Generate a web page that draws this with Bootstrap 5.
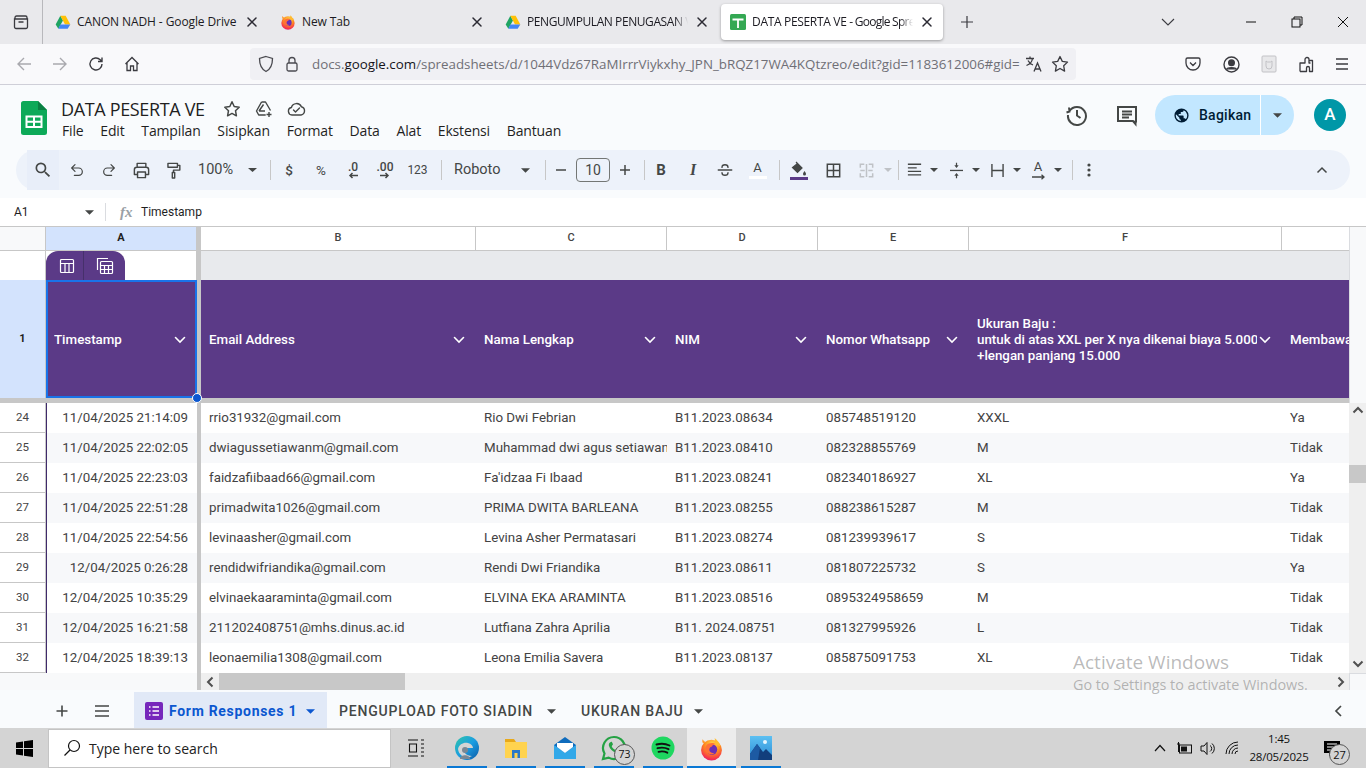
<!DOCTYPE html>
<html lang="id">
<head>
<meta charset="utf-8">
<title>DATA PESERTA VE</title>
<link rel="stylesheet" href="https://cdn.jsdelivr.net/npm/bootstrap@5.3.0/dist/css/bootstrap.min.css">
<style>
html,body{height:768px;overflow:hidden}
body{width:1366px;font-family:Roboto,"Liberation Sans",sans-serif;color:#444746;background:#fff;position:relative}
svg{display:block;flex:none}
.ic{fill:none;stroke:#444746;stroke-width:1.8;stroke-linecap:round;stroke-linejoin:round}
.icf{fill:#444746;stroke:none}
.tabstrip{height:44px;background:#e9e9ec;font-family:"Open Sans","Noto Sans",sans-serif;font-size:12px;color:#1c1b22}
.tabside{width:43px;height:44px;border-right:1px solid #b8b8bc}
.brtab{width:222px;height:36px;padding:0 8px 0 9px;gap:6px;flex:none;margin-right:3px}
.brtab.on{background:#fff;border-radius:4px;box-shadow:0 1px 3px rgba(0,0,0,.35)}
.first{margin-left:3px}
.brtxt{flex:1;overflow:hidden;white-space:nowrap;min-width:0;letter-spacing:-.1px}
.txtfade{-webkit-mask-image:linear-gradient(90deg,#000 92%,transparent);mask-image:linear-gradient(90deg,#000 92%,transparent)}
.tight{letter-spacing:-.42px}
.tight0{letter-spacing:-.32px}
.tight2{letter-spacing:-.75px}
.xbtn{width:16px;height:16px}
.newtab{margin-left:11px;width:20px}
.winbtns{margin-left:auto}
.chev{margin-right:52px}
.wbtn{width:46px;height:44px}
.navrow{height:41px;background:#f9f9fb;border-bottom:1px solid #cfcfd8;padding-left:6px}
.nb{width:36px;height:40px}
.nb4{width:35px}
.urlbar{width:826px;height:32px;margin-left:101px;background:#f0f0f4;border-radius:4px;padding:0 7px 0 8px;font-family:"Open Sans","Noto Sans",sans-serif;font-size:13.35px;color:#6f6f76}
.urltxt{flex:1;min-width:0;overflow:hidden;white-space:nowrap;margin-left:13px}
.urltxt b{font-weight:400;color:#15141a}
.lockgap{margin-left:11px}
.rnav{margin-left:98px}
.nb5{width:38px;height:40px}
.nb6{width:32px}
.shead{height:65px;background:#f9fbfd;padding-left:21px}
.slogo{margin-top:16px;margin-right:14px}
.stitlecol{padding-top:13px}
.stitle{font-family:"Open Sans","Noto Sans",sans-serif;font-size:18px;line-height:22px;color:#1f1f1f;letter-spacing:-.35px;width:152px;white-space:nowrap;margin-right:3px}
.titleic{width:32px}
.smenu{margin-top:1px;gap:16.75px;font-family:"Open Sans","Noto Sans",sans-serif;font-size:14px;line-height:20px;color:#1f1f1f;letter-spacing:-.15px;padding-left:1px}
.sright{margin-left:auto;padding-right:20px;padding-top:10px}
.hbtn{width:50px;height:40px}
.sharebtn{width:139px;height:40px;border-radius:20px;background:#c2e7ff;color:#001d35;margin-left:3px;margin-right:20px;overflow:hidden;font-size:14px;font-weight:500;letter-spacing:.25px}
.sharemain{width:106px;height:40px;padding-left:18px;gap:9px;border-right:1px solid #fff}
.sharecar{flex:1;height:40px}
.avatar{width:32px;height:32px;border-radius:50%;background:#0097a7;color:#fff;font-size:17px;font-weight:500}
.tbwrap{height:48px;background:#f9fbfd;padding:0 16px}
.tbpill{height:40px;background:#edf2fa;border-radius:20px;padding-left:11px;font-size:13.5px;color:#444746}
.tk{flex:none;height:40px;display:flex;align-items:center;justify-content:center}
.thov{background:#e8eef9}
.w8{width:9px}.w12{width:12px}.w30{width:30px}.w32{width:32px}.w33{width:33px}
.tzoom{width:73px;padding-left:9px;justify-content:flex-start;font-size:14.5px}
.tzoom span{width:50px}
.tfont{width:95px;padding-left:12px;justify-content:flex-start;font-size:14.5px}
.tfont span{width:67px}
.tsep{width:1px;height:20px;background:#c7c7c7;flex:none}
.m1{margin-left:1px}.m2{margin-left:2px}.m3{margin-left:3px}.m4{margin-left:4px}.m5{margin-left:5px}.m7{margin-left:7px}.m8{margin-left:8px}.m10{margin-left:10px}
.sizebox{width:34px;height:24px;border:1px solid #747775;border-radius:4px;font-size:14px;color:#444746;flex:none}
.tbold{font-weight:700;font-size:15px}
.tital{font-style:italic;font-weight:700;font-size:16px;font-family:"Liberation Serif",serif}
.tsm{font-size:12px}
.tdec{font-size:12px;font-weight:500;line-height:10px;text-align:center}
.tcolor{flex-direction:column;font-size:13px;line-height:14px}
.cbar{width:18px;height:3px;display:block;background:#fff;margin-top:1px}
.cbar2{background:#5b3a87;margin-top:0}
.tup{margin-left:auto;margin-right:12px}
.fxbar{height:29px;background:#fff;font-size:12px;color:#1f1f1f;border-bottom:1px solid #c7c7c7}
.namebox{width:106px;padding-left:14px;border-right:1px solid #dadce0;height:18px;padding-right:11px}
.fxl{font-family:"Liberation Serif",serif;font-style:italic;font-size:15px;color:#9aa0a6;width:35px;padding-left:14px;font-weight:700}
.gridarea{height:446px}
.sheetgrid{width:1349px;table-layout:fixed;border-collapse:separate;border-spacing:0;font-size:13.33px;color:#434343}
.sheetgrid td,.sheetgrid th{padding:0;overflow:hidden;white-space:nowrap;font-weight:400}
.wr{width:46px}.wa{width:151px}.wz{width:4px}.wb{width:275px}.wc{width:191px}.wd{width:151px}.we{width:151px}.wf{width:313px}.wg{width:67px}
.rowc{height:24px}
.rowc th{height:24px;text-align:center;font-size:11px;color:#444;font-weight:500;border-right:1px solid #c7c7c7;border-bottom:1px solid #c7c7c7;background:#fff}
.rowc .corner{background:#f8f9fa}
.rowc .csel{background:#d3e3fd;font-weight:700;color:#1f1f1f}
.rowc .lastc{border-right:0}
.fz{background:#c7c7c7!important;border:0!important}
.rowf{height:29px}
.rowf td{height:29px;background:#e8eaed;vertical-align:bottom}
.rowf .cw{background:#fff;border-right:1px solid #c7c7c7}
.rowf .rwn{background:#fff;border-right:1px solid #c7c7c7}
.ftab{width:79px;height:29px;background:#5b3a87;border-radius:12px 12px 0 0}
.ftab div{height:29px}
.ftab1{width:38px;padding-left:4px;border-right:1px solid #46306b}
.ftab2{flex:1}
.rowh{height:118px}
.rowh td{height:118px;background:#5b3a87;color:#fff;font-weight:500;padding:2px 11px 0 8px;line-height:16px;font-size:13.33px}
.rowh .rnh{background:#d3e3fd;color:#1f1f1f;text-align:center;font-size:11px;font-weight:700;padding:0;border-right:1px solid #c7c7c7}
.rowh .sela{border:2px solid #1a73e8;padding:2px 9px 0 6px}
.hc{gap:2px}
.hc span{flex:1;min-width:0;overflow:hidden}
.rowz{height:5px}
.rowz td{height:5px;background:#c7c7c7;line-height:0;font-size:0}
.rowd{height:30px}
.rowd td{height:30px;padding:0 8px;background:#fff}
.rowd:nth-child(even) td{background:#f7f8fa}
.rowd .rn{padding:0;text-align:center;font-size:11.5px;color:#444;background:#fff!important;border-right:1px solid #c7c7c7;border-bottom:1px solid #c7c7c7}
.rowd .ca{border-left:1px solid #3f2a6b;text-align:right;padding-right:9px}
.vbar{width:17px;height:446px;background:#f8f9fa}
.vtop{height:176px;background:#f8f9fa;border-left:1px solid #dadce0}
.vtrack{height:270px;background:#efefef;padding-bottom:2px}
.varrow{height:14px}
.vthumb{height:18px;background:#c8c8c8;margin-top:48px}
.hbar{height:17px;background:#f8f9fa}
.hleft{width:197px}
.hz{width:4px;background:#c7c7c7}
.htrack{flex:1;background:#efefef}
.harrow{width:18px}
.hthumb{width:186px;background:#c8c8c8}
.hright{margin-left:auto;width:17px;height:17px}
.hend{width:17px;background:#f8f9fa;border-left:1px solid #dadce0;border-top:1px solid #dadce0}
.tabsbar{height:38px;background:#f9fbfd;font-size:14px;letter-spacing:.8px;font-weight:500;color:#444746;padding-top:2px}
.addsh{width:40px;margin-left:42px;margin-top:2px}
.allsh{width:40px;margin-top:2px}
.shtab{height:36px;white-space:nowrap;padding-top:2px}
.shon{margin-left:12px;width:193px;background:#e1e9f7;color:#0b57d0;font-weight:700;padding-left:11px;gap:6px;letter-spacing:.7px}
.shon .car{margin-left:3px}
.sht2{padding-left:12px;width:254px;gap:14px}
.sht3{gap:10px}
.navprev{margin-left:auto;margin-right:23px;margin-top:2px}
.taskbar{height:40px;background:#d4d4d4;font-family:"Open Sans","Noto Sans",sans-serif;color:#111}
.startb{width:48px;height:40px}
.tsearch{width:343px;height:39px;background:#fff;padding-left:14px;gap:8px;font-size:14px;border:1px solid #c4c4c4;color:#222}
.tv{width:50px;height:40px}
.tapps{margin-left:1px}
.tapp{width:49px;height:40px;position:relative;flex:none}
.tapp::after{content:"";position:absolute;left:5px;right:4px;bottom:0;height:2px;background:#0a78d4}
.tact{background:#ececec}
.tact::after{left:0;right:0}
.tcount{position:absolute;right:3px;bottom:3px;width:21px;height:21px;border-radius:50%;background:#d4d4d4;border:1px solid #555;font-size:10.5px;line-height:19px;text-align:center;color:#111}
.tray{margin-left:auto;padding-right:12px}
.tr1{width:24px;height:40px}
.clock{width:62px;text-align:center;font-size:11.5px;line-height:18px;margin-left:4px;letter-spacing:-.2px}
.notif{width:44px;height:40px;position:relative}
.ncount{position:absolute;right:4px;bottom:3px;width:21px;height:21px;border-radius:50%;background:#d4d4d4;border:1px solid #555;font-size:11px;line-height:19px;text-align:center}
.wmark{position:absolute;left:1073px;top:650px;font-family:"Open Sans","Noto Sans",sans-serif;color:rgba(90,90,90,.42);pointer-events:none;white-space:nowrap}
.wm1{font-size:19px;line-height:24px}
.wm2{font-size:14.4px;line-height:22px;letter-spacing:-.03px}
.seldot{position:absolute;left:192px;top:393px;width:10px;height:10px;border-radius:50%;background:#0b57d0;border:1px solid #fff}
</style>
</head>
<body>
<svg width="0" height="0" style="position:absolute">
<defs>
<symbol id="drive" viewBox="0 0 24 22">
<polygon points="8,1 12,8 5,20.5 1,14" fill="#1fa463"/>
<polygon points="8,1 16,1 23,14 15,14" fill="#ffc107"/>
<polygon points="8,14 23,14 19,20.5 5,20.5" fill="#4285f4"/>
</symbol>
<radialGradient id="ffg" cx="55%" cy="25%" r="85%"><stop offset="0" stop-color="#ffe24a"/><stop offset=".45" stop-color="#ff8a1f"/><stop offset=".8" stop-color="#f5304e"/><stop offset="1" stop-color="#c81f8a"/></radialGradient>
<symbol id="fox" viewBox="0 0 24 24">
<circle cx="12" cy="13.5" r="10" fill="url(#ffg)"/>
<path d="M15 2c2.500 2 5 5 5.500 8L16 8z" fill="#ffbd2e"/>
<path d="M4 7c-1-1-1-3-.5-4 1 2 2.500 2.500 4 3z" fill="#ff9b2e"/>
<circle cx="12.500" cy="13" r="5" fill="#6b2fb5"/>
<path d="M7 9c2-2.500 7-3 9-1-2 0-3 1-3.500 2-2 .5-3 2-2.500 4 .5 2 3 3 5 2-2.500 3-7 1.500-8.500-1.500C5.500 12.500 6 10.500 7 9z" fill="#ff7139"/>
</symbol>
<symbol id="car" viewBox="0 0 10 5"><polygon points="0,0 10,0 5,5" fill="#444746"/></symbol>
<symbol id="x" viewBox="0 0 16 16"><path d="M4 4l8 8M12 4l-8 8" stroke="#2b2a33" stroke-width="1.500" stroke-linecap="round" fill="none"/></symbol>
<symbol id="chv" viewBox="0 0 12 8"><path d="M1.500 1.500L6 6l4.500-4.500" stroke="#fff" stroke-width="1.600" fill="none" stroke-linecap="round"/></symbol>
</defs>
</svg>

<!-- Browser tab strip -->
<div class="tabstrip d-flex align-items-center">
 <div class="tabside d-flex align-items-center justify-content-center">
  <svg width="18" height="18" viewBox="0 0 18 18" fill="none" stroke="#3b3b40" stroke-width="1.300"><path d="M3 6V4.500A1.500 1.500 0 0 1 4.500 3h9A1.500 1.500 0 0 1 15 4.500V6M2.500 6h13v8a1.500 1.500 0 0 1-1.500 1.500H4A1.500 1.500 0 0 1 2.500 14zM6.500 9h5"/></svg>
 </div>
 <div class="brtab first d-flex align-items-center"><svg width="16" height="15"><use href="#drive"/></svg><div class="brtxt">CANON NADH - Google Drive</div><svg class="xbtn" width="16" height="16"><use href="#x"/></svg></div>
 <div class="brtab d-flex align-items-center"><svg width="16" height="16"><use href="#fox"/></svg><div class="brtxt">New Tab</div><svg class="xbtn" width="16" height="16"><use href="#x"/></svg></div>
 <div class="brtab d-flex align-items-center"><svg width="16" height="15"><use href="#drive"/></svg><div class="brtxt txtfade tight">PENGUMPULAN PENUGASAN V</div><svg class="xbtn" width="16" height="16"><use href="#x"/></svg></div>
 <div class="brtab on d-flex align-items-center"><svg width="16" height="16" viewBox="0 0 16 16"><rect width="16" height="16" rx="1.500" fill="#34a853"/><path d="M2.500 5.500h11M8 5.500V14" stroke="#fff" stroke-width="1.800"/></svg><div class="brtxt txtfade tight0">DATA PESERTA VE <span class="tight2">- Google Spre</span></div><svg class="xbtn" width="16" height="16"><use href="#x"/></svg></div>
 <svg class="newtab" width="20" height="20" viewBox="0 0 20 20"><path d="M10 4v12M4 10h12" stroke="#3b3b40" stroke-width="1.200"/></svg>
 <div class="winbtns d-flex align-items-center">
  <svg class="chev" width="16" height="16" viewBox="0 0 16 16"><path d="M2 5l6 6 6-6" stroke="#3b3b40" stroke-width="1.100" fill="none"/></svg>
  <div class="wbtn d-flex align-items-center justify-content-center"><svg width="12" height="12" viewBox="0 0 12 12"><path d="M1 6h10" stroke="#111" stroke-width="1"/></svg></div>
  <div class="wbtn d-flex align-items-center justify-content-center"><svg width="12" height="12" viewBox="0 0 12 12" fill="none" stroke="#111"><rect x="1" y="3" width="8" height="8"/><path d="M3 3V1h8v8H9"/></svg></div>
  <div class="wbtn d-flex align-items-center justify-content-center"><svg width="12" height="12" viewBox="0 0 12 12"><path d="M1 1l10 10M11 1L1 11" stroke="#111" stroke-width="1"/></svg></div>
 </div>
</div>

<!-- Browser nav -->
<div class="navrow d-flex align-items-center">
 <div class="nb d-flex align-items-center justify-content-center"><svg width="16" height="16" viewBox="0 0 16 16" fill="none" stroke="#a9a9ae" stroke-width="1.400"><path d="M15 8H2M8 2L2 8l6 6"/></svg></div>
 <div class="nb d-flex align-items-center justify-content-center"><svg width="16" height="16" viewBox="0 0 16 16" fill="none" stroke="#a9a9ae" stroke-width="1.400"><path d="M1 8h13M8 2l6 6-6 6"/></svg></div>
 <div class="nb d-flex align-items-center justify-content-center"><svg width="16" height="16" viewBox="0 0 16 16" fill="none" stroke="#3b3b40" stroke-width="1.400"><path d="M14 8a6 6 0 1 1-1.800-4.300L14 5.500M14 1.500v4h-4"/></svg></div>
 <div class="nb nb4 d-flex align-items-center justify-content-center"><svg width="16" height="16" viewBox="0 0 16 16" fill="none" stroke="#3b3b40" stroke-width="1.300"><path d="M1.500 8L8 1.500 14.500 8M3 7v7.500h3.500V10h3v4.500H13V7"/></svg></div>
 <div class="urlbar d-flex align-items-center">
  <svg width="16" height="18" viewBox="0 0 16 18" fill="none" stroke="#4a4a50" stroke-width="1.300"><path d="M8 1.500L14.500 3.500C14.500 10 13 14 8 16.500 3 14 1.500 10 1.500 3.500z"/></svg>
  <svg class="lockgap" width="14" height="16" viewBox="0 0 14 16" fill="none" stroke="#4a4a50" stroke-width="1.300"><rect x="2" y="7" width="10" height="8" rx="1.500"/><path d="M4 7V4.500a3 3 0 0 1 6 0V7"/></svg>
  <div class="urltxt">docs.<b>google.com</b>/spreadsheets/d/1044Vdz67RaMIrrrViykxhy_JPN_bRQZ17WA4KQtzreo/edit?gid=1183612006#gid=</div>
  <svg class="m2" width="18" height="18" viewBox="0 0 18 18" fill="none" stroke="#3b3b40" stroke-width="1.300"><path d="M1 3.500h8M5 1.500v2M7.500 3.500C7 7 4 9.500 1.500 10.500M3 5.500c1 2 2.500 3.500 5 4.500M9 16.500l3.500-8.500 3.500 8.500M10 14h5"/></svg>
  <svg class="m8" width="18" height="18" viewBox="0 0 18 18" fill="none" stroke="#3b3b40" stroke-width="1.300" stroke-linejoin="round"><path d="M9 1.500l2.300 4.900 5.200.7-3.800 3.700.9 5.300L9 13.500 4.400 16.100l.9-5.300L1.500 7.100l5.200-.7z"/></svg>
 </div>
 <div class="rnav d-flex align-items-center">
  <div class="nb5 d-flex align-items-center justify-content-center"><svg width="16" height="16" viewBox="0 0 16 16" fill="none" stroke="#3b3b40" stroke-width="1.300"><path d="M2.500 2h11A1.500 1.500 0 0 1 15 3.500V7a7 7 0 0 1-14 0V3.500A1.500 1.500 0 0 1 2.500 2zM5 6.500l3 3 3-3"/></svg></div>
  <div class="nb5 d-flex align-items-center justify-content-center"><svg width="17" height="17" viewBox="0 0 17 17" fill="none" stroke="#3b3b40" stroke-width="1.400"><circle cx="8.500" cy="8.500" r="7.500"/><circle cx="8.500" cy="6.800" r="2.800" fill="#3b3b40"/><path d="M3.500 13.500c1-2.500 9-2.500 10 0" fill="#3b3b40"/></svg></div>
  <div class="nb5 d-flex align-items-center justify-content-center"><svg width="16" height="18" viewBox="0 0 16 18" fill="#e8e8ea" stroke="#c2c2c6"><rect x="1" y="1" width="14" height="16" rx="1"/><path d="M5 6v5a3 3 0 0 0 6 0V6l-1.500 1h-3z" fill="none"/></svg></div>
  <div class="nb5 d-flex align-items-center justify-content-center"><svg width="18" height="18" viewBox="0 0 18 18" fill="none" stroke="#3b3b40" stroke-width="1.300" stroke-linejoin="round"><path d="M2 16.500V8h5V4.500a2 2 0 0 1 4 0V8h1.500M2 16.500h6.500V13a1.500 1.500 0 0 1 3 0v3.500h3V5.500h-3"/></svg></div>
  <div class="nb5 nb6 d-flex align-items-center justify-content-center"><svg width="14" height="14" viewBox="0 0 14 14"><path d="M1 2h12M1 7h12M1 12h12" stroke="#3b3b40" stroke-width="1.300"/></svg></div>
 </div>
</div>

<!-- Sheets header -->
<header class="shead d-flex">
 <svg class="slogo" width="26" height="34" viewBox="0 0 26 34"><path d="M2.500 0H17l9 9v22.500a2.500 2.500 0 0 1-2.500 2.500h-21A2.500 2.500 0 0 1 0 31.500v-29A2.500 2.500 0 0 1 2.500 0z" fill="#0da958"/><path d="M17 0l9 9h-9z" fill="#0a8043"/><path d="M5.500 15.500h15v10.500h-15zM13 15.500V26M5.500 20.700h15" fill="none" stroke="#fff" stroke-width="2"/></svg>
 <div class="stitlecol">
  <div class="d-flex align-items-center">
   <div class="stitle">DATA PESERTA VE</div>
   <div class="titleic d-flex justify-content-center"><svg width="18" height="18" viewBox="0 0 18 18" fill="none" stroke="#444746" stroke-width="1.500" stroke-linejoin="round"><path d="M9 1.800l2.200 4.700 5 .7-3.700 3.500.9 5.100L9 13.400l-4.400 2.400.9-5.100L1.800 7.200l5-.7z"/></svg></div>
   <div class="titleic d-flex justify-content-center"><svg width="18" height="18" viewBox="0 0 18 18" fill="none" stroke="#444746" stroke-width="1.400" stroke-linejoin="round"><path d="M6.500 2h4l5 8.500M6.500 2L1.500 11l2.200 4h7M4 11l4.500-6.500M4 11h6M14 12v5M11.500 14.500h5"/></svg></div>
   <div class="titleic d-flex justify-content-center"><svg width="19" height="18" viewBox="0 0 19 18" fill="none" stroke="#444746" stroke-width="1.400" stroke-linejoin="round" stroke-linecap="round"><path d="M5 15a3.800 3.800 0 0 1-.6-7.500A5.300 5.300 0 0 1 14.400 6.800 4.200 4.200 0 0 1 14 15zM6.500 10l2 2 4-4"/></svg></div>
  </div>
  <nav class="smenu d-flex"><span>File</span><span>Edit</span><span>Tampilan</span><span>Sisipkan</span><span>Format</span><span>Data</span><span>Alat</span><span>Ekstensi</span><span>Bantuan</span></nav>
 </div>
 <div class="sright d-flex align-items-center align-self-start">
  <div class="hbtn d-flex align-items-center justify-content-center"><svg width="24" height="24" viewBox="0 0 24 24" fill="none" stroke="#444746" stroke-width="2"><path d="M4.500 8A9 9 0 1 1 3 12M1.500 9.500L4.500 8.500 4 4.500M12 7v5.500l3.500 2.500"/></svg></div>
  <div class="hbtn d-flex align-items-center justify-content-center"><svg width="24" height="24" viewBox="0 0 24 24" fill="none" stroke="#444746" stroke-width="2"><path d="M3 4h18v14.500h-0.500V21L18 18H3zM7 8.500h10M7 11.500h10M7 14.500h7"/></svg></div>
  <div class="sharebtn d-flex">
   <div class="sharemain d-flex align-items-center"><svg width="17" height="17" viewBox="0 0 24 24"><path fill="#001d35" d="M12 2a10 10 0 1 0 0 20 10 10 0 0 0 0-20zm-1 17.900A8 8 0 0 1 4.200 10.200L9 15v1a2 2 0 0 0 2 2zm6.900-2.500A2 2 0 0 0 16 16h-1v-3a1 1 0 0 0-1-1H8v-2h2a1 1 0 0 0 1-1V7h2a2 2 0 0 0 2-2v-.4a8 8 0 0 1 2.900 12.800z"/></svg><span>Bagikan</span></div>
   <div class="sharecar d-flex align-items-center justify-content-center"><svg width="9" height="5"><use href="#car"/></svg></div>
  </div>
  <div class="avatar d-flex align-items-center justify-content-center">A</div>
 </div>
</header>

<!-- Toolbar -->
<div class="tbwrap">
 <div class="tbpill d-flex align-items-center">
  <div class="tk w32 thov"><svg width="20" height="20" viewBox="0 0 24 24"><path class="icf" d="M15.500 14h-.79l-.28-.27A6.471 6.471 0 0 0 16 9.500 6.500 6.500 0 1 0 9.500 16c1.610 0 3.090-.59 4.230-1.570l.27.28v.79l5 4.990L20.490 19l-4.990-5zm-6 0C7.010 14 5 11.990 5 9.500S7.010 5 9.500 5 14 7.010 14 9.500 11.990 14 9.500 14z"/></svg></div>
  <div class="tk w32 m2"><svg width="16" height="16" viewBox="0 0 24 24" class="ic"><path d="M9 14L4 9l5-5M4 9h10.500a5.500 5.500 0 0 1 0 11H8"/></svg></div>
  <div class="tk w32"><svg width="16" height="16" viewBox="0 0 24 24" class="ic"><path d="M15 14l5-5-5-5M20 9H9.500a5.500 5.500 0 0 0 0 11H16"/></svg></div>
  <div class="tk w32"><svg width="19" height="19" viewBox="0 0 24 24" class="ic"><path d="M6.500 8V3h11v5M6.500 17H3v-6a3 3 0 0 1 3-3h12a3 3 0 0 1 3 3v6h-3.500M7 14h10v7H7z"/></svg></div>
  <div class="tk w32"><svg width="19" height="19" viewBox="0 0 24 24" class="ic"><path d="M5 3h12v5H5zM17 5.500h3v6h-8v3M10.500 14.500h3v7h-3z"/></svg></div>
  <div class="tk tzoom"><span>100%</span><svg width="9" height="4" viewBox="0 0 10 5" preserveAspectRatio="none"><use href="#car"/></svg></div>
  <div class="tsep m8"></div>
  <div class="tk w32 m2 fw-medium">$</div>
  <div class="tk w32">%</div>
  <div class="tk w32 tdec flex-column"><span>.0</span><svg width="12" height="7" viewBox="0 0 12 7"><path d="M11 3.500H3M5.500 1L3 3.500 5.500 6" fill="none" stroke="#444746" stroke-width="1.500"/></svg></div>
  <div class="tk w32 tdec flex-column"><span>.00</span><svg width="12" height="7" viewBox="0 0 12 7"><path d="M1 3.500h8M6.500 1L9 3.500 6.500 6" fill="none" stroke="#444746" stroke-width="1.500"/></svg></div>
  <div class="tk w33 tsm">123</div>
  <div class="tsep m7"></div>
  <div class="tk tfont"><span>Roboto</span><svg width="9" height="5"><use href="#car"/></svg></div>
  <div class="tsep m8"></div>
  <div class="tk w30"><svg width="12" height="12" viewBox="0 0 12 12"><path d="M1 6h10" stroke="#444746" stroke-width="1.500"/></svg></div>
  <div class="sizebox d-flex align-items-center justify-content-center">10</div>
  <div class="tk w30"><svg width="12" height="12" viewBox="0 0 12 12"><path d="M1 6h10M6 1v10" stroke="#444746" stroke-width="1.500"/></svg></div>
  <div class="tsep m4"></div>
  <div class="tk w32 tbold">B</div>
  <div class="tk w32 tital">I</div>
  <div class="tk w32"><svg width="18" height="18" viewBox="0 0 24 24" class="ic"><path d="M3 12h18M8 8.500C8 6 10 5 12 5s4 1 4 3.500M8 15.500c0 2.500 2 3.500 4 3.500s4-1 4-3.500"/></svg></div>
  <div class="tk w33 tcolor"><span>A</span><span class="cbar"></span></div>
  <div class="tsep m5"></div>
  <div class="tk w32 m3"><div class="tcolor d-flex align-items-center"><svg width="18" height="16" viewBox="0 0 18 16"><path d="M6 1l6 6-4.500 4.500L2.500 6.500 7 3" fill="#444746" stroke="#444746" stroke-width="1.200"/><path d="M14.500 10c1 1.500 1.500 2.200 1.500 3a1.500 1.500 0 0 1-3 0c0-.8.500-1.500 1.500-3z" fill="#444746"/></svg><span class="cbar cbar2"></span></div></div>
  <div class="tk w32 m2"><svg width="15" height="15" viewBox="0 0 17 17" fill="none" stroke="#444746" stroke-width="1.700"><path d="M1.500 1.500h14v14h-14zM8.500 1.500v14M1.500 8.500h14"/></svg></div>
  <div class="tk w32 m1"><svg width="15" height="15" viewBox="0 0 17 17" fill="none" stroke="#bfc2c6" stroke-width="1.700"><path d="M6 1.500H1.500v4M11 1.500h4.500v4M6 15.500H1.500v-4M11 15.500h4.500v-4M1.500 8.500h5M15.500 8.500h-5M8.500 1v15"/></svg></div>
  <div class="tk w12"><svg width="8" height="4" viewBox="0 0 10 5"><polygon points="0,0 10,0 5,5" fill="#bfc2c6"/></svg></div>
  <div class="tsep m4"></div>
  <div class="tk w30"><svg width="15" height="14" viewBox="0 0 17 15"><path d="M1 1h15M1 5h10M1 9h15M1 13h15" stroke="#444746" stroke-width="1.500"/></svg></div>
  <div class="tk w8"><svg width="8" height="4" viewBox="0 0 10 5"><use href="#car"/></svg></div>
  <div class="tk w30 m3"><svg width="13" height="17" viewBox="0 0 15 18" fill="#444746"><rect y="8.200" width="15" height="1.500"/><path d="M6.800 0h1.400v3H10L7.500 6 5 3h1.800zM8.200 18H6.800v-3H5l2.500-3 2.500 3H8.200z"/></svg></div>
  <div class="tk w8"><svg width="8" height="4" viewBox="0 0 10 5"><use href="#car"/></svg></div>
  <div class="tk w30 m2"><svg width="13" height="13" viewBox="0 0 14 14" fill="none" stroke="#444746" stroke-width="1.500"><path d="M1 0v14M13 0v14M1 7h12"/></svg></div>
  <div class="tk w8"><svg width="8" height="4" viewBox="0 0 10 5"><use href="#car"/></svg></div>
  <div class="tk w30 m2 tcolor"><span>A</span><svg width="15" height="6" viewBox="0 0 15 6"><path d="M1 3h12M10.500.8L13 3l-2.500 2.200" fill="none" stroke="#444746" stroke-width="1.300"/></svg></div>
  <div class="tk w8"><svg width="8" height="4" viewBox="0 0 10 5"><use href="#car"/></svg></div>
  <div class="tsep m10"></div>
  <div class="tk w32"><svg width="4" height="14" viewBox="0 0 4 14" fill="#444746"><circle cx="2" cy="2" r="1.600"/><circle cx="2" cy="7" r="1.600"/><circle cx="2" cy="12" r="1.600"/></svg></div>
  <div class="tk w32 tup"><svg width="12" height="8" viewBox="0 0 12 8"><path d="M1.500 6.500L6 2l4.500 4.500" fill="none" stroke="#444746" stroke-width="1.500"/></svg></div>
 </div>
</div>

<!-- Formula bar -->
<div class="fxbar d-flex align-items-center">
 <div class="namebox d-flex align-items-center justify-content-between"><span>A1</span><svg width="9" height="5"><use href="#car"/></svg></div>
 <div class="fxl">fx</div>
 <div>Timestamp</div>
</div>

<!-- Grid -->
<div class="gridarea d-flex">
 <div>
 <table class="sheetgrid">
  <colgroup><col class="wr"><col class="wa"><col class="wz"><col class="wb"><col class="wc"><col class="wd"><col class="we"><col class="wf"><col class="wg"></colgroup>
  <thead>
   <tr class="rowc"><th class="corner"></th><th class="csel">A</th><th class="fz"></th><th>B</th><th>C</th><th>D</th><th>E</th><th>F</th><th class="lastc"></th></tr>
   <tr class="rowf"><td class="rwn"></td><td class="cw"><div class="ftab d-flex"><div class="ftab1 d-flex align-items-center justify-content-center"><svg width="16" height="16" viewBox="0 0 16 16" fill="none" stroke="#fff" stroke-width="1.200"><rect x="1.500" y="1.500" width="13" height="13" rx="1"/><path d="M1.500 5.500h13M6 5.500v9M10 5.500v9"/></svg></div><div class="ftab2 d-flex align-items-center justify-content-center"><svg width="18" height="18" viewBox="0 0 18 18" fill="none" stroke="#fff" stroke-width="1.200"><path d="M1.500 13V1.500H12"/><rect x="4.500" y="4.500" width="12" height="12" rx="1"/><path d="M4.500 8.500h12M8.500 8.500v8M12.500 8.500v8M4.500 12.500h12"/></svg></div></div></td><td class="fz"></td><td colspan="6"></td></tr>
   <tr class="rowh"><td class="rnh">1</td><td class="sela"><div class="hc d-flex align-items-center"><span>Timestamp</span><svg width="12" height="8"><use href="#chv"/></svg></div></td><td class="fz"></td>
    <td><div class="hc d-flex align-items-center"><span>Email Address</span><svg width="12" height="8"><use href="#chv"/></svg></div></td>
    <td><div class="hc d-flex align-items-center"><span>Nama Lengkap</span><svg width="12" height="8"><use href="#chv"/></svg></div></td>
    <td><div class="hc d-flex align-items-center"><span>NIM</span><svg width="12" height="8"><use href="#chv"/></svg></div></td>
    <td><div class="hc d-flex align-items-center"><span>Nomor Whatsapp</span><svg width="12" height="8"><use href="#chv"/></svg></div></td>
    <td><div class="hc d-flex align-items-center"><span>Ukuran Baju :<br>untuk di atas XXL per X nya dikenai biaya 5.000<br>+lengan panjang 15.000</span><svg width="12" height="8"><use href="#chv"/></svg></div></td>
    <td>Membawa</td></tr>
   <tr class="rowz"><td colspan="9"></td></tr>
  </thead>
  <tbody>
   <tr class="rowd"><td class="rn">24</td><td class="ca">11/04/2025 21:14:09</td><td class="fz"></td><td>rrio31932@gmail.com</td><td>Rio Dwi Febrian</td><td>B11.2023.08634</td><td>085748519120</td><td>XXXL</td><td>Ya</td></tr>
   <tr class="rowd"><td class="rn">25</td><td class="ca">11/04/2025 22:02:05</td><td class="fz"></td><td>dwiagussetiawanm@gmail.com</td><td>Muhammad dwi agus setiawan</td><td>B11.2023.08410</td><td>082328855769</td><td>M</td><td>Tidak</td></tr>
   <tr class="rowd"><td class="rn">26</td><td class="ca">11/04/2025 22:23:03</td><td class="fz"></td><td>faidzafiibaad66@gmail.com</td><td>Fa'idzaa Fi Ibaad</td><td>B11.2023.08241</td><td>082340186927</td><td>XL</td><td>Ya</td></tr>
   <tr class="rowd"><td class="rn">27</td><td class="ca">11/04/2025 22:51:28</td><td class="fz"></td><td>primadwita1026@gmail.com</td><td>PRIMA DWITA BARLEANA</td><td>B11.2023.08255</td><td>088238615287</td><td>M</td><td>Tidak</td></tr>
   <tr class="rowd"><td class="rn">28</td><td class="ca">11/04/2025 22:54:56</td><td class="fz"></td><td>levinaasher@gmail.com</td><td>Levina Asher Permatasari</td><td>B11.2023.08274</td><td>081239939617</td><td>S</td><td>Tidak</td></tr>
   <tr class="rowd"><td class="rn">29</td><td class="ca">12/04/2025 0:26:28</td><td class="fz"></td><td>rendidwifriandika@gmail.com</td><td>Rendi Dwi Friandika</td><td>B11.2023.08611</td><td>081807225732</td><td>S</td><td>Ya</td></tr>
   <tr class="rowd"><td class="rn">30</td><td class="ca">12/04/2025 10:35:29</td><td class="fz"></td><td>elvinaekaaraminta@gmail.com</td><td>ELVINA EKA ARAMINTA</td><td>B11.2023.08516</td><td>0895324958659</td><td>M</td><td>Tidak</td></tr>
   <tr class="rowd"><td class="rn">31</td><td class="ca">12/04/2025 16:21:58</td><td class="fz"></td><td>211202408751@mhs.dinus.ac.id</td><td>Lutfiana Zahra Aprilia</td><td>B11. 2024.08751</td><td>081327995926</td><td>L</td><td>Tidak</td></tr>
   <tr class="rowd"><td class="rn">32</td><td class="ca">12/04/2025 18:39:13</td><td class="fz"></td><td>leonaemilia1308@gmail.com</td><td>Leona Emilia Savera</td><td>B11.2023.08137</td><td>085875091753</td><td>XL</td><td>Tidak</td></tr>
  </tbody>
 </table>
 </div>
 <div class="vbar">
  <div class="vtop"></div>
  <div class="vtrack d-flex flex-column">
   <div class="varrow d-flex justify-content-center align-items-center"><svg width="12" height="8" viewBox="0 0 12 8"><path d="M1.500 6.500L6 2l4.500 4.500" fill="none" stroke="#505050" stroke-width="2"/></svg></div>
   <div class="vthumb"></div>
   <div class="varrow mt-auto d-flex justify-content-center align-items-center"><svg width="12" height="8" viewBox="0 0 12 8"><path d="M1.500 1.500L6 6l4.500-4.500" fill="none" stroke="#505050" stroke-width="2"/></svg></div>
  </div>
 </div>
</div>
<div class="hbar d-flex">
 <div class="hleft"></div><div class="hz"></div>
 <div class="htrack d-flex">
  <div class="harrow d-flex align-items-center justify-content-center"><svg width="8" height="12" viewBox="0 0 8 12"><path d="M6.500 1.500L2 6l4.500 4.500" fill="none" stroke="#505050" stroke-width="2"/></svg></div>
  <div class="hthumb"></div>
  <div class="hright d-flex align-items-center justify-content-center"><svg width="8" height="12" viewBox="0 0 8 12"><path d="M1.500 1.500L6 6l-4.500 4.500" fill="none" stroke="#505050" stroke-width="2"/></svg></div>
 </div>
 <div class="hend"></div>
</div>

<!-- Sheet tabs -->
<div class="tabsbar d-flex align-items-center">
 <div class="addsh d-flex justify-content-center"><svg width="14" height="14" viewBox="0 0 14 14"><path d="M7 1.500v11M1.500 7h11" stroke="#444746" stroke-width="1.600"/></svg></div>
 <div class="allsh d-flex justify-content-center"><svg width="16" height="12" viewBox="0 0 16 12"><path d="M1 1h14M1 6h14M1 11h14" stroke="#444746" stroke-width="1.500"/></svg></div>
 <div class="shtab shon d-flex align-items-center"><svg width="18" height="18" viewBox="0 0 18 18"><rect width="18" height="18" rx="2" fill="#7627bb"/><path d="M4 5h1.500M7.500 5H14M4 9h1.500M7.500 9H14M4 13h1.500M7.500 13H14" stroke="#fff" stroke-width="1.500"/></svg><span>Form Responses 1</span><svg class="car" width="9" height="5" viewBox="0 0 10 5"><polygon points="0,0 10,0 5,5" fill="#0b57d0"/></svg></div>
 <div class="shtab sht2 d-flex align-items-center"><span>PENGUPLOAD FOTO SIADIN</span><svg width="9" height="5"><use href="#car"/></svg></div>
 <div class="shtab sht3 d-flex align-items-center"><span>UKURAN BAJU</span><svg width="9" height="5"><use href="#car"/></svg></div>
 <svg class="navprev" width="9" height="14" viewBox="0 0 9 14"><path d="M7 2L2 7l5 5" fill="none" stroke="#444746" stroke-width="1.700"/></svg>
</div>

<!-- Windows taskbar -->
<footer class="taskbar d-flex align-items-center">
 <div class="startb d-flex align-items-center justify-content-center"><svg width="17" height="17" viewBox="0 0 17 17" fill="#000"><path d="M0 2.500l7-1v6.500H0zM8 1.300L17 0v8H8zM0 9h7v6.500l-7-1zM8 9h9v8l-9-1.300z"/></svg></div>
 <div class="tsearch d-flex align-items-center"><svg width="18" height="18" viewBox="0 0 18 18" fill="none" stroke="#111" stroke-width="1.200"><circle cx="11" cy="7" r="5.500"/><path d="M7 11L1.500 16.500"/></svg><span>Type here to search</span></div>
 <div class="tv d-flex align-items-center justify-content-center"><svg width="16" height="18" viewBox="0 0 16 18" fill="none" stroke="#111" stroke-width="1.100"><path d="M0 1h10M0 17h10M1.500 5h7v8h-7zM13 1h3M13 5h3M13 9h3M13 13h3M13 17h3"/></svg></div>
 <div class="tapps d-flex">
  <div class="tapp d-flex align-items-center justify-content-center"><svg width="26" height="26" viewBox="0 0 26 26"><defs><linearGradient id="edg" x1="0" y1="0" x2="1" y2="1"><stop offset="0" stop-color="#2fc6a8"/><stop offset=".5" stop-color="#1b9de2"/><stop offset="1" stop-color="#0c59a4"/></linearGradient></defs><circle cx="13" cy="13" r="12" fill="url(#edg)"/><path d="M4 14c1-5 6-7 10-6 3 .8 5 3 5 5H10c-1 4 2 8 8 8-5 3-13 1-14-7z" fill="#d4d4d4"/><circle cx="11" cy="15" r="3" fill="#7a8794"/><path d="M6 24c0-5 10-5 10 0z" fill="#7a8794"/></svg></div>
  <div class="tapp d-flex align-items-center justify-content-center"><svg width="24" height="22" viewBox="0 0 24 22"><path d="M1 2h9l2 3H1z" fill="#e8a91a"/><rect x="1" y="5" width="22" height="16" fill="#ffd34f"/><rect x="8" y="13" width="8" height="8" fill="#2b78c6"/><rect x="10.500" y="16" width="3" height="5" fill="#ffd34f"/></svg></div>
  <div class="tapp d-flex align-items-center justify-content-center"><svg width="24" height="24" viewBox="0 0 24 24"><path d="M1 9L12 1l11 8v14H1z" fill="#0f6cbd"/><path d="M1 9l11 8 11-8v14H1z" fill="#32a8e8"/><path d="M4 7h16v4l-8 6-8-6z" fill="#fff"/></svg></div>
  <div class="tapp d-flex align-items-center justify-content-center"><svg width="26" height="26" viewBox="0 0 26 26"><path d="M13 2a11 11 0 0 0-9.500 16.500L2 24l5.700-1.400A11 11 0 1 0 13 2z" fill="none" stroke="#25a244" stroke-width="2.200"/><path d="M9 7.500c-1 .5-1.500 2-1 3.500 1 3 3.500 5.500 6.500 6.500 1.500.5 3 0 3.500-1 .3-.7.300-1.400 0-1.600l-2.500-1.200-1.200 1.200c-1.500-.6-3-2-3.600-3.600L12 9.300l-1.200-2.500c-.3-.2-1-.1-1.800.7z" fill="#25a244"/></svg><div class="tcount">73</div></div>
  <div class="tapp d-flex align-items-center justify-content-center"><svg width="24" height="24" viewBox="0 0 24 24"><circle cx="12" cy="12" r="11.500" fill="#1ed760"/><path d="M5.500 8.500c4.500-1.300 9-1 13 1M6.500 12.200c3.800-1 7.500-.8 11 1M7.500 15.800c3-.8 6-.6 8.800.9" fill="none" stroke="#111" stroke-width="1.900" stroke-linecap="round"/></svg></div>
  <div class="tapp tact d-flex align-items-center justify-content-center"><svg width="25" height="25"><use href="#fox"/></svg></div>
  <div class="tapp d-flex align-items-center justify-content-center"><svg width="22" height="24" viewBox="0 0 22 24"><defs><linearGradient id="phg" x1="0" y1="0" x2="0" y2="1"><stop offset="0" stop-color="#5cc0f2"/><stop offset="1" stop-color="#2a8ad4"/></linearGradient></defs><rect width="22" height="24" fill="url(#phg)"/><path d="M0 18l7-10 6 8 3-3 6 6v5H0z" fill="#123e7c"/><path d="M0 24v-6l7-10 3 4-2 12z" fill="#1d5aa3"/><circle cx="15" cy="6" r="2" fill="#e6f6ff"/></svg></div>
 </div>
 <div class="tray d-flex align-items-center">
  <div class="tr1 d-flex align-items-center justify-content-center"><svg width="12" height="8" viewBox="0 0 12 8"><path d="M1 7l5-5.500L11 7" fill="none" stroke="#111" stroke-width="1.200"/></svg></div>
  <div class="tr1 d-flex align-items-center justify-content-center"><svg width="17" height="13" viewBox="0 0 17 13"><rect x="3.500" y="3" width="12" height="8" fill="none" stroke="#111"/><rect x="5" y="4.500" width="6" height="5" fill="#111"/><path d="M1 2h3M2.500 0v4M2.500 4v6" stroke="#111"/></svg></div>
  <div class="tr1 d-flex align-items-center justify-content-center"><svg width="17" height="15" viewBox="0 0 17 15" fill="none" stroke="#111"><path d="M1 5h3l3-3.500v12L4 10H1zM10 4.500a3.500 3.500 0 0 1 0 6M12 2.500a6.500 6.500 0 0 1 0 10"/></svg></div>
  <div class="tr1 d-flex align-items-center justify-content-center"><svg width="15" height="14" viewBox="0 0 15 14" fill="none" stroke="#111"><path d="M1 13A12 12 0 0 1 13 1M4 13A9 9 0 0 1 13 4M7 13a6 6 0 0 1 6-6M10 13a3 3 0 0 1 3-3"/></svg></div>
  <div class="clock"><div>1:45</div><div>28/05/2025</div></div>
  <div class="notif d-flex align-items-center justify-content-center"><svg width="16" height="15" viewBox="0 0 16 15"><path d="M0 0h16v12H8l-3 3v-3H0z" fill="#000"/><path d="M3 3h10M3 6h10M3 9h7" stroke="#fff"/></svg><div class="ncount">27</div></div>
 </div>
</footer>

<div class="seldot"></div>
<div class="wmark"><div class="wm1">Activate Windows</div><div class="wm2">Go to Settings to activate Windows.</div></div>
</body>
</html>
